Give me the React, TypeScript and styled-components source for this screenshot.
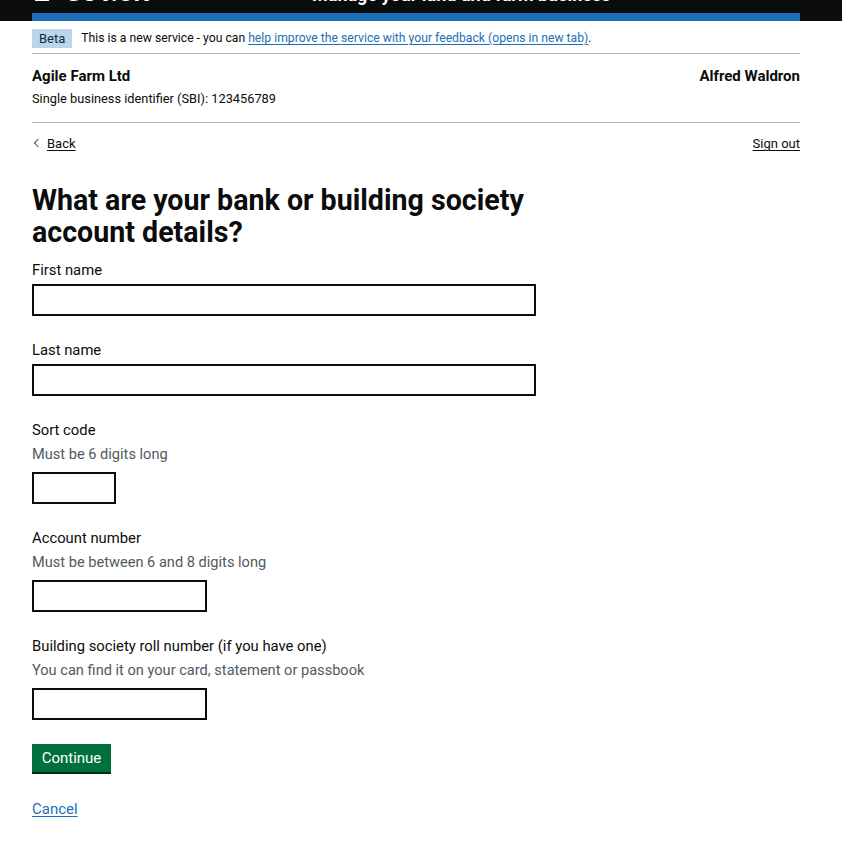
import React from "react";
import styled, { createGlobalStyle } from "styled-components";

const Global = createGlobalStyle`
  html, body { margin: 0; padding: 0; background: #ffffff; }
  body { font-family: Roboto, "Liberation Sans", Arial, sans-serif; color: #0b0c0c; }
  * { box-sizing: border-box; }
`;

const Header = styled.header`
  background: #0b0c0c;
  height: 21px;
  overflow: hidden;
`;

const HeaderContainer = styled.div`
  margin-left: 32px;
  width: 768px;
  height: 21px;
  border-bottom: 8px solid #1d70b8;
  overflow: hidden;
`;

const HeaderRow = styled.div`
  height: 13px;
  overflow: hidden;
`;

const HeaderInner = styled.div`
  display: flex;
  align-items: baseline;
  margin-top: -26px;
  height: 38px;
  color: #ffffff;
`;

const Logo = styled.span`
  display: inline-flex;
  align-items: baseline;
  gap: 16px;
  font-weight: 700;
  font-size: 24px;
  line-height: 38px;
  width: 280px;
  padding-left: 3px;
`;

const ServiceName = styled.span`
  font-weight: 700;
  font-size: 18px;
  line-height: 38px;
`;

const Container = styled.div`
  margin-left: 32px;
  width: 768px;
`;

const PhaseBanner = styled.div`
  display: flex;
  align-items: center;
  gap: 9px;
  padding: 7px 0 5px;
  border-bottom: 1px solid #b1b4b6;
  font-size: 12.2px;
  line-height: 20px;
`;

const Tag = styled.strong`
  background: #bbd4ea;
  color: #0c2d4a;
  font-weight: 400;
  font-size: 13px;
  line-height: 19px;
  padding: 0 7px;
`;

const Link = styled.a<{ $dark?: boolean }>`
  color: ${(p) => (p.$dark ? "#0b0c0c" : "#1d70b8")};
  text-decoration: underline;
  text-underline-offset: 2px;
  text-decoration-thickness: 1px;
`;

const AccountBar = styled.div`
  display: flex;
  justify-content: space-between;
  align-items: flex-start;
  padding: 12px 0 13px;
  border-bottom: 1px solid #b1b4b6;
`;

const Org = styled.div`
  display: flex;
  flex-direction: column;
  gap: 3px;
`;

const OrgName = styled.div`
  font-size: 15px;
  font-weight: 700;
  line-height: 20px;
`;

const OrgMeta = styled.div`
  font-size: 12.8px;
  line-height: 20px;
`;

const NavRow = styled.div`
  display: flex;
  justify-content: space-between;
  align-items: center;
  padding-top: 12px;
  font-size: 13px;
  line-height: 18px;
`;

const BackLink = styled(Link)`
  display: inline-flex;
  align-items: center;
  gap: 6px;
  color: #0b0c0c;
  &::before {
    content: "";
    width: 5px;
    height: 5px;
    border-left: 1px solid #505a5f;
    border-bottom: 1px solid #505a5f;
    transform: rotate(45deg);
    margin-left: 3px;
    margin-bottom: 2px;
  }
`;

const Main = styled.main`
  padding-top: 31px;
  width: 504px;
`;

const Heading = styled.h1`
  font-size: 28.6px;
  line-height: 32px;
  font-weight: 700;
  margin: 0 0 12px;
`;

const FormGroup = styled.div`
  margin-bottom: 24px;
  display: flex;
  flex-direction: column;
  align-items: flex-start;
`;

const Label = styled.label`
  font-size: 14.8px;
  line-height: 20px;
  margin-bottom: 4px;
`;

const Hint = styled.div`
  font-size: 14.6px;
  line-height: 20px;
  color: #505a5f;
  margin-bottom: 8px;
`;

const Input = styled.input<{ $w: number }>`
  width: ${(p) => p.$w}px;
  height: 32px;
  border: 2px solid #0b0c0c;
  border-radius: 0;
  padding: 4px;
  font-size: 16px;
  font-family: inherit;
  margin: 0;
`;

const Button = styled.button`
  background: #00703c;
  color: #ffffff;
  border: 0;
  border-radius: 0;
  box-shadow: 0 2px 0 #002d18;
  font-family: inherit;
  font-size: 15px;
  line-height: 20px;
  padding: 4px 9px;
  width: 79px;
  height: 28px;
  margin: 0 0 27px;
  cursor: pointer;
`;

const Actions = styled.div`
  display: flex;
  flex-direction: column;
  align-items: flex-start;
`;

const CancelLink = styled(Link)`
  font-size: 15px;
  line-height: 20px;
`;

const fields = [
  { id: "first", label: "First name", w: 504 },
  { id: "last", label: "Last name", w: 504 },
  { id: "sort", label: "Sort code", hint: "Must be 6 digits long", w: 84 },
  { id: "acc", label: "Account number", hint: "Must be between 6 and 8 digits long", w: 175 },
  {
    id: "roll",
    label: "Building society roll number (if you have one)",
    hint: "You can find it on your card, statement or passbook",
    w: 175,
  },
];

export default function App() {
  return (
    <>
      <Global />
      <Header>
        <HeaderContainer>
          <HeaderRow>
            <HeaderInner>
              <Logo>
                <svg width="14" height="12" viewBox="0 0 14 12" aria-hidden="true">
                  <rect x="0" y="0" width="14" height="12" fill="#fff" />
                </svg>
                GOV.UK
              </Logo>
              <ServiceName>Manage your land and farm business</ServiceName>
            </HeaderInner>
          </HeaderRow>
        </HeaderContainer>
      </Header>
      <Container>
        <PhaseBanner>
          <Tag>Beta</Tag>
          <span>
            This is a new service - you can{" "}
            <Link href="#">help improve the service with your feedback (opens in new tab)</Link>.
          </span>
        </PhaseBanner>
        <AccountBar>
          <Org>
            <OrgName>Agile Farm Ltd</OrgName>
            <OrgMeta>Single business identifier (SBI): 123456789</OrgMeta>
          </Org>
          <OrgName>Alfred Waldron</OrgName>
        </AccountBar>
        <NavRow>
          <BackLink href="#">Back</BackLink>
          <Link href="#" $dark>
            Sign out
          </Link>
        </NavRow>
        <Main>
          <Heading>What are your bank or building society account details?</Heading>
          {fields.map((f) => (
            <FormGroup key={f.id}>
              <Label htmlFor={f.id}>{f.label}</Label>
              {f.hint && <Hint>{f.hint}</Hint>}
              <Input id={f.id} type="text" $w={f.w} />
            </FormGroup>
          ))}
          <Actions>
            <Button>Continue</Button>
            <CancelLink href="#">Cancel</CancelLink>
          </Actions>
        </Main>
      </Container>
    </>
  );
}
